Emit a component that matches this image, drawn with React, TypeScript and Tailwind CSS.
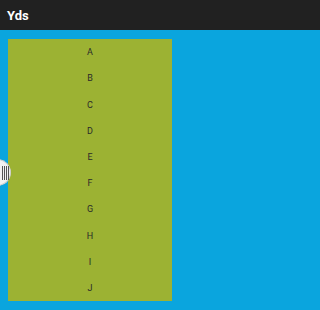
import React from 'react';

const letters = ['A', 'B', 'C', 'D', 'E', 'F', 'G', 'H', 'I', 'J'];

export default function App() {
  return (
    <div className="relative w-full h-[310px] flex flex-col bg-[#0aa5de] font-['Roboto',sans-serif] overflow-hidden">
      {/* Action bar */}
      <div className="h-[30px] shrink-0 bg-[#212121] flex items-center px-[7px]">
        <span className="text-white font-bold text-[13px] leading-none">Yds</span>
      </div>

      {/* Content */}
      <div className="flex-1 pt-[9px] pl-[8px]">
        <div className="w-[164px] h-[262px] bg-[#9cb233] flex flex-col">
          {letters.map((l) => (
            <div key={l} className="flex-1 flex items-center justify-center pt-[1px] text-[9px] text-[#2a2a2a] leading-none">
              {l}
            </div>
          ))}
        </div>
      </div>

      {/* Drawer handle */}
      <div className="absolute left-[-3px] top-[159px] w-[14px] h-[27px] rounded-r-full bg-[#f2f2f2] border border-[#cfcfcf] flex items-center justify-center gap-[1px] pl-[2px]">
        <span className="w-[1px] h-[14px] bg-[#555555]" />
        <span className="w-[1px] h-[14px] bg-[#555555]" />
        <span className="w-[1px] h-[14px] bg-[#555555]" />
        <span className="w-[1px] h-[14px] bg-[#555555]" />
      </div>
    </div>
  );
}
